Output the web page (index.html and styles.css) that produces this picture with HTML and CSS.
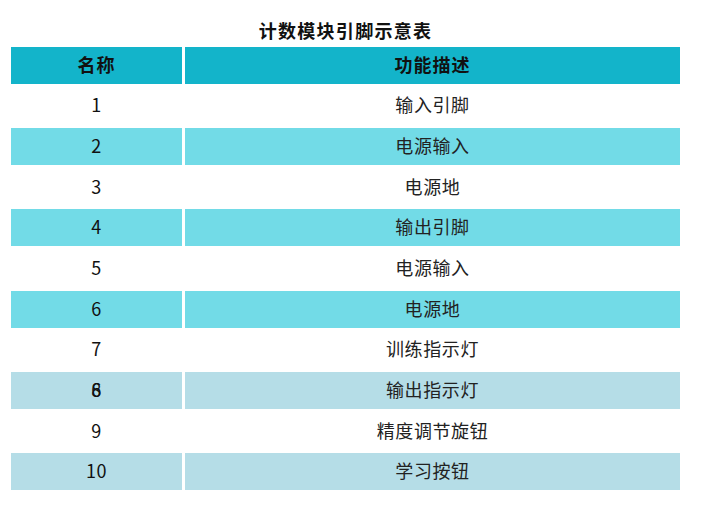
FILE: index.html
```html
<!DOCTYPE html>
<html lang="zh">
<head>
<meta charset="utf-8">
<link rel="stylesheet" href="styles.css">
</head>
<body>
<div class="page">
  <div class="title">计数模块引脚示意表</div>
  <div class="table">
    <div class="cell head">名称</div><div class="cell head">功能描述</div>
    <div class="cell num">1</div><div class="cell">输入引脚</div>
    <div class="cell num cyan">2</div><div class="cell cyan">电源输入</div>
    <div class="cell num">3</div><div class="cell">电源地</div>
    <div class="cell num cyan">4</div><div class="cell cyan">输出引脚</div>
    <div class="cell num">5</div><div class="cell">电源输入</div>
    <div class="cell num cyan">6</div><div class="cell cyan">电源地</div>
    <div class="cell num">7</div><div class="cell">训练指示灯</div>
    <div class="cell num pale"><span class="stack">8<span class="ghost">6</span></span></div><div class="cell pale">输出指示灯</div>
    <div class="cell num">9</div><div class="cell">精度调节旋钮</div>
    <div class="cell num pale">10</div><div class="cell pale">学习按钮</div>
  </div>
</div>
</body>
</html>
```
FILE: styles.css
```css
html, body {
  margin: 0;
  padding: 0;
  background: #ffffff;
}
body {
  font-family: "Noto Sans CJK SC", "Microsoft YaHei", sans-serif;
  color: #222222;
}
.page {
  width: 669px;
  padding: 0 0 0 11px;
}
.title {
  height: 46.5px;
  box-sizing: border-box;
  padding-top: 18px;
  line-height: 24px;
  text-align: center;
  font-size: 18px;
  letter-spacing: 1.3px;
  font-weight: 700;
  color: #111111;
}
.table {
  display: grid;
  grid-template-columns: 171px 495px;
  column-gap: 3px;
  row-gap: 3.7px;
  grid-auto-rows: 37px;
}
.cell {
  display: flex;
  align-items: center;
  justify-content: center;
  box-sizing: border-box;
  padding-bottom: 3px;
  font-size: 18px;
  letter-spacing: 0.6px;
  line-height: 1;
  background: #ffffff;
}
.num {
  color: #111111;
}
.head {
  background: #13b4ca;
  font-weight: 700;
  color: #111111;
  letter-spacing: 1px;
}
.cyan {
  background: #72dbe7;
}
.pale {
  background: #b5dde7;
}
.stack {
  position: relative;
  display: inline-block;
}
.ghost {
  position: absolute;
  left: 0;
  top: 0;
}
```
